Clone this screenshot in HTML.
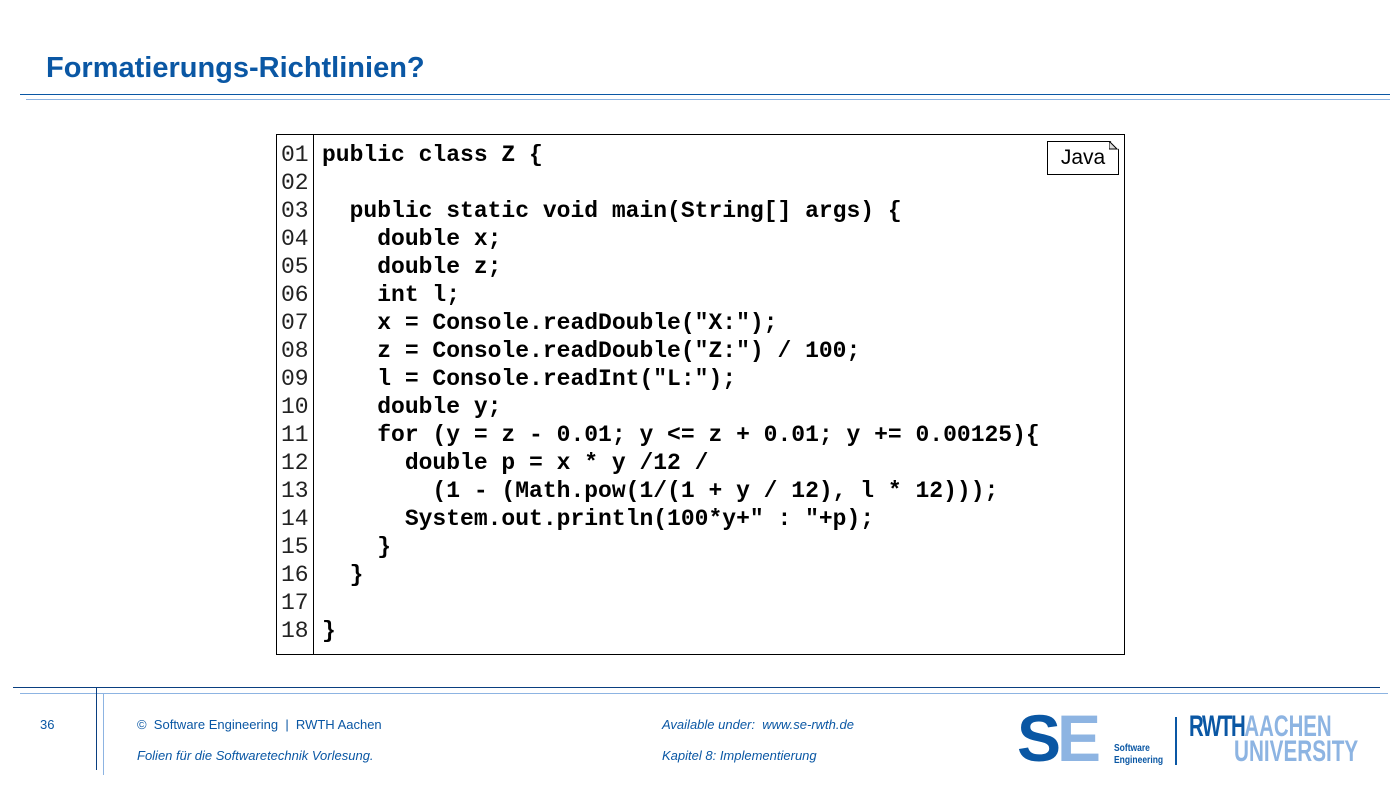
<!DOCTYPE html>
<html><head><style>
body{margin:0;width:1400px;height:788px;background:#fff;position:relative;overflow:hidden;font-family:"Liberation Sans",Arial,sans-serif}
.a{position:absolute}
.title{left:46px;top:52px;font-size:29px;font-weight:bold;color:#0a57a4}
.code{left:276px;top:134px;width:847px;height:519px;border:1px solid #000}
.nums{position:absolute;left:0;top:0;width:36px;height:519px;border-right:1px solid #000}
pre{margin:0;font-family:"Liberation Mono",monospace;font-size:23px;line-height:28px;position:absolute;top:6px}
.f{font-size:13px;color:#0a57a4}
</style></head><body>
<div class="a title">Formatierungs-Richtlinien?</div>
<div class="a" style="left:20px;top:94px;width:1370px;height:1px;background:#0a57a4"></div>
<div class="a" style="left:26px;top:99px;width:1364px;height:1px;background:#8db4e2"></div>

<div class="a code">
<div class="nums"><pre style="left:4px;color:#222">01
02
03
04
05
06
07
08
09
10
11
12
13
14
15
16
17
18</pre></div>
<pre style="left:45px;font-weight:bold">public class Z {

  public static void main(String[] args) {
    double x;
    double z;
    int l;
    x = Console.readDouble("X:");
    z = Console.readDouble("Z:") / 100;
    l = Console.readInt("L:");
    double y;
    for (y = z - 0.01; y &lt;= z + 0.01; y += 0.00125){
      double p = x * y /12 /
        (1 - (Math.pow(1/(1 + y / 12), l * 12)));
      System.out.println(100*y+" : "+p);
    }
  }

}</pre>
<div class="a" style="left:770px;top:6px;width:70px;height:32px;border:1px solid #000;font-size:21px;line-height:32px;text-align:center;clip-path:polygon(0 0,88% 0,100% 25%,100% 100%,0 100%)">Java</div>
<svg class="a" style="left:832px;top:6px" width="10" height="10"><path d="M0 0 L0 8 L8 8 Z" fill="#ddd" stroke="#000" stroke-width="1"/></svg>
</div>

<div class="a" style="left:13px;top:687px;width:1367px;height:1px;background:#0a3f80"></div>
<div class="a" style="left:20px;top:693px;width:1368px;height:1px;background:#8db4e2"></div>
<div class="a" style="left:96px;top:687px;width:1px;height:83px;background:#0a3f80"></div>
<div class="a" style="left:103px;top:693px;width:1px;height:82px;background:#8db4e2"></div>
<div class="a f" style="left:40px;top:717px">36</div>
<div class="a f" style="left:137px;top:717px">©&nbsp;&nbsp;Software Engineering&nbsp;&nbsp;|&nbsp;&nbsp;RWTH Aachen</div>
<div class="a f" style="left:137px;top:748px;font-style:italic">Folien für die Softwaretechnik Vorlesung.</div>
<div class="a f" style="left:662px;top:717px;font-style:italic">Available under:&nbsp;&nbsp;www.se-rwth.de</div>
<div class="a f" style="left:662px;top:748px;font-style:italic">Kapitel 8: Implementierung</div>

<div class="a" style="left:1017px;top:703px;font-size:66px;font-weight:bold;line-height:70px;letter-spacing:-4px"><span style="color:#0a57a4">S</span><span style="color:#8db4e2">E</span></div>
<div class="a" style="left:1114px;top:743px;font-size:10px;font-weight:bold;color:#0a57a4;line-height:12px;transform:scaleX(.85);transform-origin:left">Software<br>Engineering</div>
<div class="a" style="left:1175px;top:717px;width:2px;height:48px;background:#0a57a4"></div>
<div class="a" style="left:1189px;top:713px;font-size:30px;font-weight:bold;line-height:28px;transform:scaleX(.68);transform-origin:left;white-space:nowrap"><span style="color:#0a57a4;letter-spacing:-2px">RWTH</span><span style="color:#8db4e2">AACHEN</span></div>
<div class="a" style="left:1234px;top:738px;font-size:30px;font-weight:bold;color:#8db4e2;line-height:28px;transform:scaleX(.69);transform-origin:left;white-space:nowrap">UNIVERSITY</div>
</body></html>
